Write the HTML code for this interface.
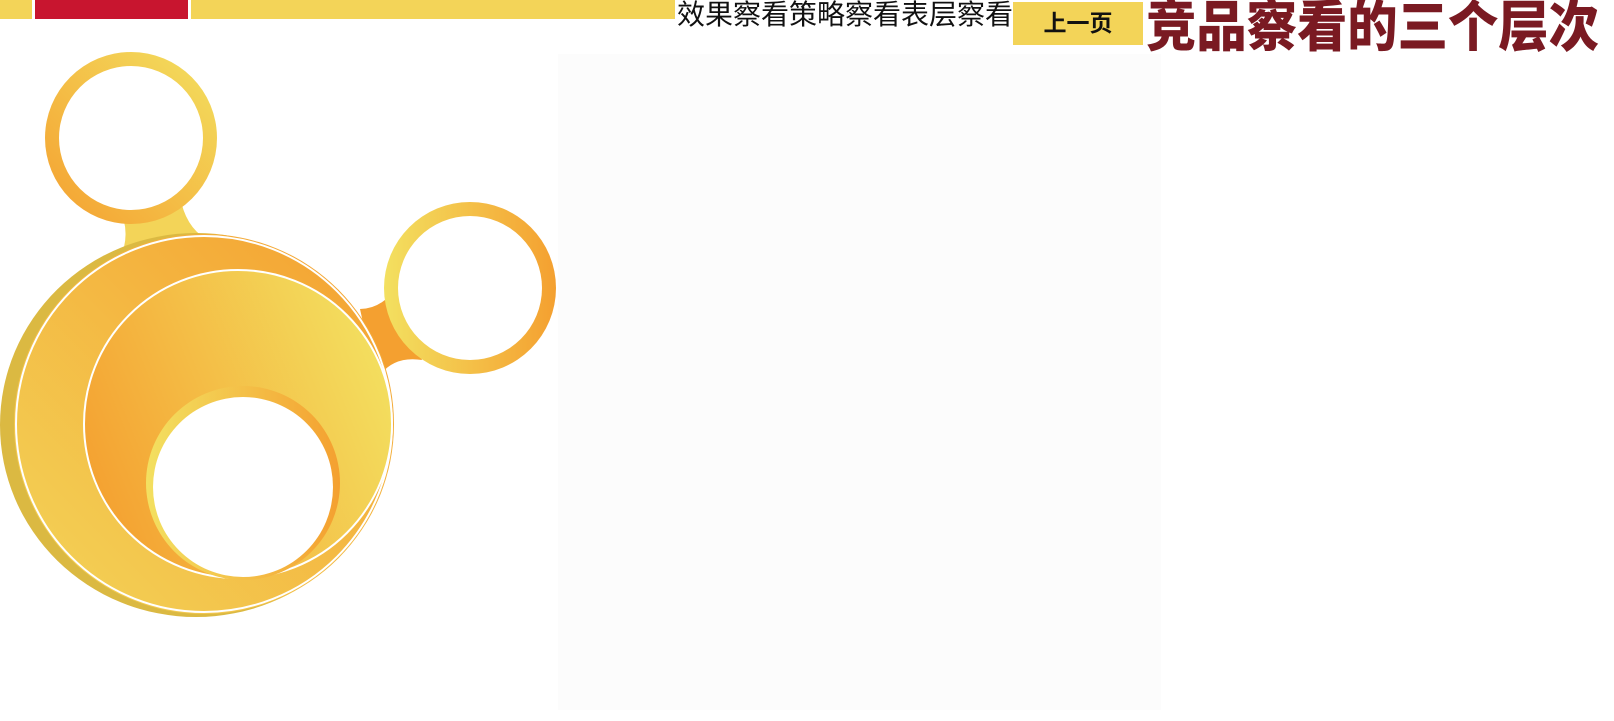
<!DOCTYPE html>
<html><head><meta charset="utf-8"><style>
body{margin:0;width:1614px;height:721px;background:#fff;position:relative;overflow:hidden;font-family:"Liberation Sans","Noto Sans CJK SC",sans-serif}
.a{position:absolute}
</style></head><body>
<div class="a" style="left:0;top:0;width:32px;height:19px;background:#f3d458"></div>
<div class="a" style="left:35px;top:0;width:153px;height:19px;background:#c8152f"></div>
<div class="a" style="left:191px;top:0;width:484px;height:19px;background:#f3d458"></div>
<div class="a" style="left:558px;top:54px;width:603px;height:656px;background:#fcfcfc"></div>
<div class="a" style="left:677px;top:-1px;font-size:28px;line-height:32px;color:#111;white-space:nowrap">效果察看策略察看表层察看</div>
<div class="a" style="left:1013px;top:2px;width:130px;height:43px;background:#f3d458;font-size:23px;font-weight:bold;line-height:43px;text-align:center;color:#111">上一页</div>
<div class="a" style="left:1146px;top:-3px;font-size:55px;font-weight:900;line-height:60px;color:#7a1a22;white-space:nowrap;transform:scaleX(0.915);transform-origin:left">竞品察看的三个层次</div>
<svg class="a" style="left:0;top:0" width="580" height="640">
<defs>
<linearGradient id="g1" x1="0" y1="1" x2="1" y2="0"><stop offset="0" stop-color="#f4a030"/><stop offset="1" stop-color="#f3e060"/></linearGradient>
<linearGradient id="g2" x1="0" y1="0" x2="1" y2="0"><stop offset="0" stop-color="#f3e060"/><stop offset="1" stop-color="#f4a030"/></linearGradient>
<linearGradient id="g3" x1="0" y1="1" x2="1" y2="0"><stop offset="0" stop-color="#f3d458"/><stop offset="1" stop-color="#f4a030"/></linearGradient>
<linearGradient id="g4" x1="0" y1="0.7" x2="1" y2="0.3"><stop offset="0" stop-color="#f4a030"/><stop offset="1" stop-color="#f3e060"/></linearGradient>
</defs>
<path d="M118,206 Q129,226 124,247 L206,239 Q185,226 180,196 Z" fill="#f3d458"/>
<path d="M360,309 Q381,309 396,288 L422,360 Q391,355 376,381 Z" fill="#f4a030"/>
<ellipse cx="196" cy="425" rx="196" ry="192" fill="#dbb942"/>
<circle cx="204" cy="424" r="190" fill="url(#g3)"/>
<circle cx="204" cy="424" r="188" fill="none" stroke="#fff" stroke-width="2"/>
<circle cx="238" cy="424" r="154" fill="url(#g4)" stroke="#fff" stroke-width="2"/>
<circle cx="243" cy="483" r="97" fill="url(#g2)"/>
<circle cx="243" cy="487" r="90" fill="#fff"/>
<circle cx="131" cy="138" r="86" fill="url(#g1)"/>
<circle cx="131" cy="138" r="72" fill="#fff"/>
<circle cx="470" cy="288" r="86" fill="url(#g2)"/>
<circle cx="470" cy="288" r="72" fill="#fff"/>
</svg>
</body></html>
